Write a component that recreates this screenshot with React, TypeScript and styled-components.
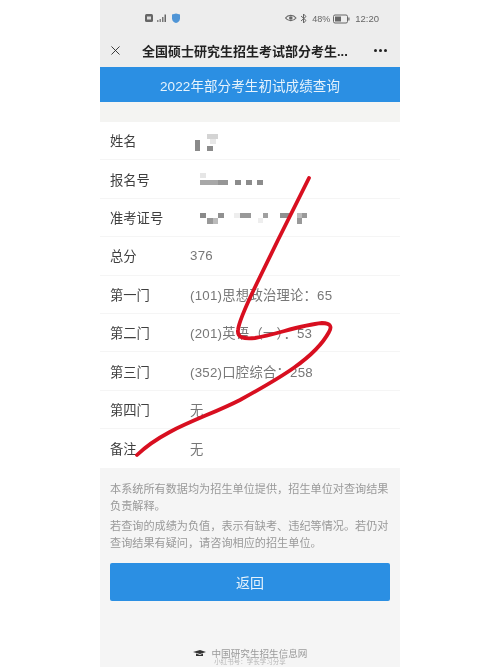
import styled, { createGlobalStyle } from "styled-components";
import { X } from "lucide-react";

const GlobalStyle = createGlobalStyle`
  html, body {
    margin: 0;
    padding: 0;
    background: #fff;
  }
  body {
    font-family: "Liberation Sans", "Noto Sans CJK SC", sans-serif;
  }
`;

const Page = styled.div`
  display: flex;
  justify-content: center;
  width: 500px;
  height: 667px;
  overflow: hidden;
  background: #fff;
`;

const Phone = styled.div`
  position: relative;
  display: flex;
  flex-direction: column;
  width: 300px;
  height: 667px;
  background: #f5f5f5;
  filter: blur(0.35px);
`;

const StatusBar = styled.div`
  display: flex;
  align-items: center;
  justify-content: space-between;
  height: 33px;
  padding: 4px 21px 0 45px;
  box-sizing: border-box;
  background: #ededed;
  color: #666;
  font-size: 9px;
`;

const StatusGroup = styled.div`
  display: flex;
  align-items: center;
  gap: 3px;
`;

const Clock = styled.span`
  margin-left: 2px;
  font-size: 9.5px;
`;

const NavBar = styled.div`
  display: flex;
  align-items: center;
  height: 34px;
  padding: 0 13px 0 8px;
  background: #ededed;
  color: #222;
`;

const NavTitle = styled.div`
  flex: 1;
  margin-left: 19px;
  font-size: 13px;
  font-weight: 700;
  white-space: nowrap;
`;

const Dots = styled.div`
  display: flex;
  gap: 2px;
`;

const Dot = styled.span`
  width: 3px;
  height: 3px;
  border-radius: 50%;
  background: #222;
`;

const Banner = styled.div`
  display: flex;
  align-items: center;
  justify-content: center;
  height: 35px;
  background: #2b8fe3;
  color: #e6f3fc;
  font-size: 13.5px;
  letter-spacing: 0.1px;
`;

const Gap = styled.div`
  height: 20px;
  background: #f4f4f2;
`;

const Table = styled.div`
  background: #fff;
`;

const Row = styled.div`
  display: flex;
  align-items: center;
  height: 38.4px;
  box-sizing: border-box;
  padding-left: 10px;
  border-bottom: 1px solid #f5f5f5;
  font-size: 13.3px;
  &:last-child {
    border-bottom: none;
  }
`;

const Label = styled.div`
  width: 80px;
  flex-shrink: 0;
  color: #3f3f3f;
`;

const Value = styled.div`
  color: #777;
  letter-spacing: 0.25px;
  white-space: nowrap;
`;

const MosaicValue = styled.svg`
  display: block;
`;

const Notes = styled.div`
  display: flex;
  flex-direction: column;
  gap: 2px;
  padding: 13px 10px 0;
  color: #999;
  font-size: 11.15px;
  line-height: 17.5px;
`;

const Note = styled.p`
  margin: 0;
`;

const BackButton = styled.button`
  display: block;
  width: 280px;
  height: 38px;
  margin: 10.5px 10px 0;
  padding: 0;
  border: none;
  border-radius: 2px;
  background: #2b8fe3;
  color: #e6f3fc;
  font-family: inherit;
  font-size: 14px;
`;

const Footer = styled.div`
  display: flex;
  align-items: center;
  justify-content: center;
  gap: 6px;
  margin-top: 45px;
  color: #9a9a9a;
  font-size: 9.6px;
`;

const Watermark = styled.div`
  margin-top: -4px;
  text-align: center;
  color: #b5b5b5;
  font-size: 6.5px;
`;

const Scribble = styled.svg`
  position: absolute;
  left: 0;
  top: 0;
  pointer-events: none;
`;

type Cell = [number, number, number, number, string];

const Mosaic = ({ cells, width }: { cells: Cell[]; width: number }) => (
  <MosaicValue width={width} height={22} viewBox={`0 0 ${width} 22`}>
    {cells.map(([x, y, w, h, fill], i) => (
      <rect key={i} x={x} y={y} width={w} height={h} fill={fill} />
    ))}
  </MosaicValue>
);

const nameCells: Cell[] = [
  [5, 10, 5, 11, "#8a8a8a"],
  [17, 4, 11, 5, "#d4d4d4"],
  [20, 9, 6, 5, "#e8e8e8"],
  [17, 16, 6, 5, "#8c8c8c"],
];

const numberCells: Cell[] = [
  [10, 5, 6, 5, "#e6e6e6"],
  [10, 12, 18, 5, "#a8a8a8"],
  [28, 12, 10, 5, "#969696"],
  [45, 12, 6, 5, "#8c8c8c"],
  [56, 12, 6, 5, "#8c8c8c"],
  [67, 12, 6, 5, "#8c8c8c"],
];

const ticketCells: Cell[] = [
  [10, 7, 6, 5, "#8a8a8a"],
  [17, 12, 6, 6, "#999"],
  [23, 12, 5, 6, "#bbb"],
  [28, 7, 6, 5, "#909090"],
  [44, 7, 6, 5, "#eee"],
  [50, 7, 11, 5, "#999"],
  [73, 7, 5, 5, "#a0a0a0"],
  [68, 12, 5, 5, "#eee"],
  [90, 7, 11, 5, "#909090"],
  [107, 7, 5, 5, "#bbb"],
  [112, 7, 5, 5, "#999"],
  [107, 12, 5, 6, "#999"],
];

const rows = [
  { label: "总分", value: "376" },
  { label: "第一门", value: "(101)思想政治理论：65" },
  { label: "第二门", value: "(201)英语（一）：53" },
  { label: "第三门", value: "(352)口腔综合：258" },
  { label: "第四门", value: "无" },
  { label: "备注", value: "无" },
];

export default function App() {
  return (
    <Page>
      <GlobalStyle />
      <Phone>
        <StatusBar>
          <StatusGroup>
            <svg width="36" height="11" viewBox="0 0 36 11">
              <rect x="0" y="1" width="8" height="8" rx="1.5" fill="#666" />
              <rect x="2" y="3.5" width="4" height="3" fill="#ddd" />
              <rect x="12" y="7" width="1.5" height="2" fill="#888" />
              <rect x="14.5" y="6" width="1.5" height="3" fill="#888" />
              <rect x="17" y="4" width="1.5" height="5" fill="#777" />
              <rect x="19.5" y="1.5" width="1.5" height="7.5" fill="#666" />
              <path d="M27 1.5 L31 .5 L35 1.5 V5.5 C35 8 33 9.5 31 10 C29 9.5 27 8 27 5.5 Z" fill="#4f95d6" />
            </svg>
          </StatusGroup>
          <StatusGroup>
            <svg width="24" height="11" viewBox="0 0 24 11">
              <path d="M.5 5 C3 1.5 8.5 1.5 11 5 C8.5 8.5 3 8.5 .5 5 Z" fill="none" stroke="#666" strokeWidth="1.1" />
              <circle cx="5.8" cy="5" r="1.8" fill="#666" />
              <path d="M16 3 L21 7.5 L18.5 10 V1 L21 3.5 L16 8" fill="none" stroke="#666" strokeWidth="1" />
            </svg>
            <span>48%</span>
            <svg width="17" height="10" viewBox="0 0 17 10">
              <rect x=".5" y="1" width="14" height="8" rx="1.5" fill="none" stroke="#666" />
              <rect x="2" y="2.5" width="6" height="5" fill="#666" />
              <rect x="15.3" y="3.5" width="1.2" height="3" fill="#666" />
            </svg>
            <Clock>12:20</Clock>
          </StatusGroup>
        </StatusBar>
        <NavBar>
          <X size={15} strokeWidth={1.4} />
          <NavTitle>全国硕士研究生招生考试部分考生...</NavTitle>
          <Dots>
            <Dot />
            <Dot />
            <Dot />
          </Dots>
        </NavBar>
        <Banner>2022年部分考生初试成绩查询</Banner>
        <Gap />
        <Table>
          <Row>
            <Label>姓名</Label>
            <Value>
              <Mosaic cells={nameCells} width={30} />
            </Value>
          </Row>
          <Row>
            <Label>报名号</Label>
            <Value>
              <Mosaic cells={numberCells} width={80} />
            </Value>
          </Row>
          <Row>
            <Label>准考证号</Label>
            <Value>
              <Mosaic cells={ticketCells} width={125} />
            </Value>
          </Row>
          {rows.map((row) => (
            <Row key={row.label}>
              <Label>{row.label}</Label>
              <Value>{row.value}</Value>
            </Row>
          ))}
        </Table>
        <Notes>
          <Note>本系统所有数据均为招生单位提供，招生单位对查询结果负责解释。</Note>
          <Note>若查询的成绩为负值，表示有缺考、违纪等情况。若仍对查询结果有疑问，请咨询相应的招生单位。</Note>
        </Notes>
        <BackButton>返回</BackButton>
        <Footer>
          <svg width="13" height="8" viewBox="0 0 13 8">
            <path d="M0 3 L7 1 L13 3 L7 5 Z M3 4.5 L7 6 L10 4.5 V7 H3 Z" fill="#333" />
          </svg>
          <span>中国研究生招生信息网</span>
        </Footer>
        <Watermark>小红书号：学长学习分享</Watermark>
        <Scribble width="300" height="667" viewBox="0 0 300 667">
          <path
            d="M209 178 L178 240 L157 283 C148 302 139 320 138 330 C137 338 144 339 155 338 C175 335 200 325 222 323 C231 323 232 327 229 332 C215 358 180 378 140 400 C105 418 65 428 37 455"
            fill="none"
            stroke="#d80f20"
            strokeWidth="3.8"
            strokeLinecap="round"
            strokeLinejoin="round"
          />
        </Scribble>
      </Phone>
    </Page>
  );
}
